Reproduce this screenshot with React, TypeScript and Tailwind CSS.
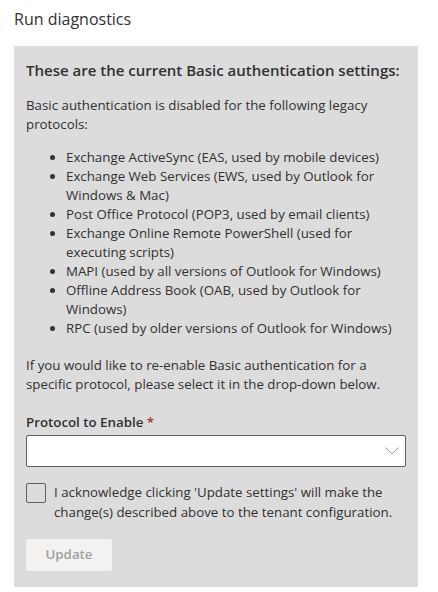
import React from 'react';

const protocols = [
  'Exchange ActiveSync (EAS, used by mobile devices)',
  'Exchange Web Services (EWS, used by Outlook for Windows & Mac)',
  'Post Office Protocol (POP3, used by email clients)',
  'Exchange Online Remote PowerShell (used for executing scripts)',
  'MAPI (used by all versions of Outlook for Windows)',
  'Offline Address Book (OAB, used by Outlook for Windows)',
  'RPC (used by older versions of Outlook for Windows)',
];

const App: React.FC = () => {
  return (
    <div className="min-h-[592px] bg-white text-[#323130]" style={{ fontFamily: '"Open Sans", "Noto Sans", sans-serif' }}>
      <div className="px-[14px] pt-[8px]">
        <h1 className="text-[16px] leading-[22px] font-normal">Run diagnostics</h1>

        <div className="mt-[16px] w-[404px] bg-[#dcdcdc] px-[12px] pt-[12px] pb-[16px]">
          <h2 className="text-[15px] leading-[24px] font-semibold">These are the current Basic authentication settings:</h2>

          <p className="mt-[14px] text-[13.3px] leading-[19px]">
            Basic authentication is disabled for the following legacy protocols:
          </p>

          <ul className="mt-[14px] pl-[40px] pr-[10px] list-disc text-[13.3px] leading-[19px]">
            {protocols.map(p => (
              <li key={p}>{p}</li>
            ))}
          </ul>

          <p className="mt-[18px] text-[13.3px] leading-[19px]">
            If you would like to re-enable Basic authentication for a specific protocol, please select it in the drop-down below.
          </p>

          <label className="mt-[18px] block text-[13.3px] leading-[20px] font-semibold">
            Protocol to Enable <span className="text-[#a4262c]">*</span>
          </label>

          <div className="mt-[3px] h-[32px] bg-white border border-[#605e5c] rounded-[2px] flex items-center justify-end pr-[6px]">
            <svg width="14" height="8" viewBox="0 0 14 8" fill="none">
              <path d="M0.5 0.5 L7 7 L13.5 0.5" stroke="#a19f9d" strokeWidth="1" />
            </svg>
          </div>

          <div className="mt-[16px] flex items-start gap-[8px]">
            <div className="w-[20px] h-[20px] shrink-0 border border-[#605e5c] rounded-[2px] bg-[#dcdcdc]" />
            <p className="text-[13.3px] leading-[20px] -mt-[1px]">
              I acknowledge clicking 'Update settings' will make the change(s) described above to the tenant configuration.
            </p>
          </div>

          <button className="mt-[17px] h-[32px] w-[86px] bg-[#f3f2f1] rounded-[2px] text-[13.3px] font-semibold text-[#a19f9d]">
            Update
          </button>
        </div>
      </div>
    </div>
  );
};

export default App;
